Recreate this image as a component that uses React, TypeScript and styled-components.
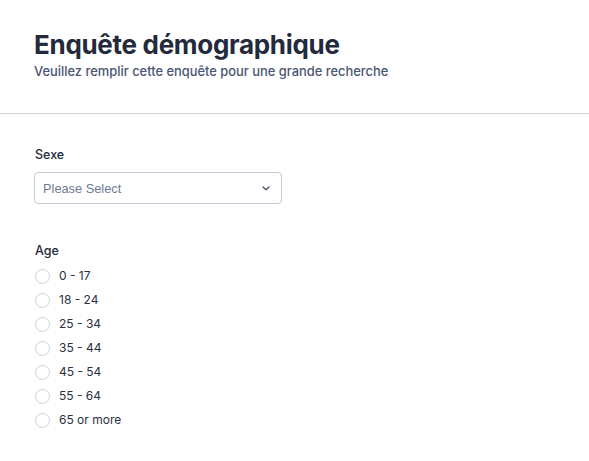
import React from "react";
import styled, { createGlobalStyle } from "styled-components";

const Global = createGlobalStyle`
  html, body { margin: 0; padding: 0; background: #ffffff; }
  body { font-family: Inter, "Noto Sans", sans-serif; color: #2d3748; }
  * { box-sizing: border-box; }
`;

const Page = styled.div`
  width: 589px;
  min-height: 461px;
  background: #ffffff;
`;

const Header = styled.header`
  padding: 29px 34px 32px 34px;
  border-bottom: 1px solid #d4d2dc;
`;

const Title = styled.h1`
  margin: 0;
  font-size: 26px;
  line-height: 32px;
  font-weight: 700;
  color: #232a3b;
  letter-spacing: -0.3px;
`;

const Subtitle = styled.p`
  margin: 2px 0 0 0;
  font-size: 12.9px;
  line-height: 18px;
  font-weight: 500;
  color: #4b5673;
`;

const Body = styled.main`
  padding: 32px 34px 0 34px;
  display: flex;
  flex-direction: column;
  gap: 38px;
`;

const Field = styled.div`
  display: flex;
  flex-direction: column;
`;

const Label = styled.label`
  font-size: 12.5px;
  line-height: 18px;
  font-weight: 500;
  color: #232a3b;
  margin-bottom: 8px;
  padding-left: 1px;
`;

const SelectBox = styled.div`
  position: relative;
  width: 248px;
  height: 32px;
  border: 1px solid #c3cbd8;
  border-radius: 4px;
  display: flex;
  align-items: center;
  padding: 0 11px 0 8px;
  justify-content: space-between;
`;

const Placeholder = styled.span`
  font-family: "Liberation Sans", Arial, sans-serif;
  font-size: 12.8px;
  color: #6e7a93;
`;

const RadioList = styled.div`
  display: flex;
  flex-direction: column;
  gap: 8px;
  margin-top: 0px;
`;

const RadioRow = styled.div`
  display: flex;
  align-items: center;
  gap: 9px;
  height: 16px;
`;

const Circle = styled.span`
  width: 15px;
  height: 15px;
  border-radius: 50%;
  border: 1px solid #c9d0dc;
  background: #ffffff;
  flex: none;
  margin-left: 1px;
`;

const RadioText = styled.span`
  font-size: 12px;
  line-height: 16px;
  color: #2a3142;
`;

const ages = ["0 - 17", "18 - 24", "25 - 34", "35 - 44", "45 - 54", "55 - 64", "65 or more"];

export default function App() {
  return (
    <Page>
      <Global />
      <Header>
        <Title>Enquête démographique</Title>
        <Subtitle>Veuillez remplir cette enquête pour une grande recherche</Subtitle>
      </Header>
      <Body>
        <Field>
          <Label>Sexe</Label>
          <SelectBox>
            <Placeholder>Please Select</Placeholder>
            <svg width="8" height="5" viewBox="0 0 8 5">
              <path d="M1 1 L4 3.8 L7 1" fill="none" stroke="#4f5a70" strokeWidth="1.5" strokeLinecap="round" strokeLinejoin="round" />
            </svg>
          </SelectBox>
        </Field>
        <Field>
          <Label>Age</Label>
          <RadioList>
            {ages.map((a) => (
              <RadioRow key={a}>
                <Circle />
                <RadioText>{a}</RadioText>
              </RadioRow>
            ))}
          </RadioList>
        </Field>
      </Body>
    </Page>
  );
}
